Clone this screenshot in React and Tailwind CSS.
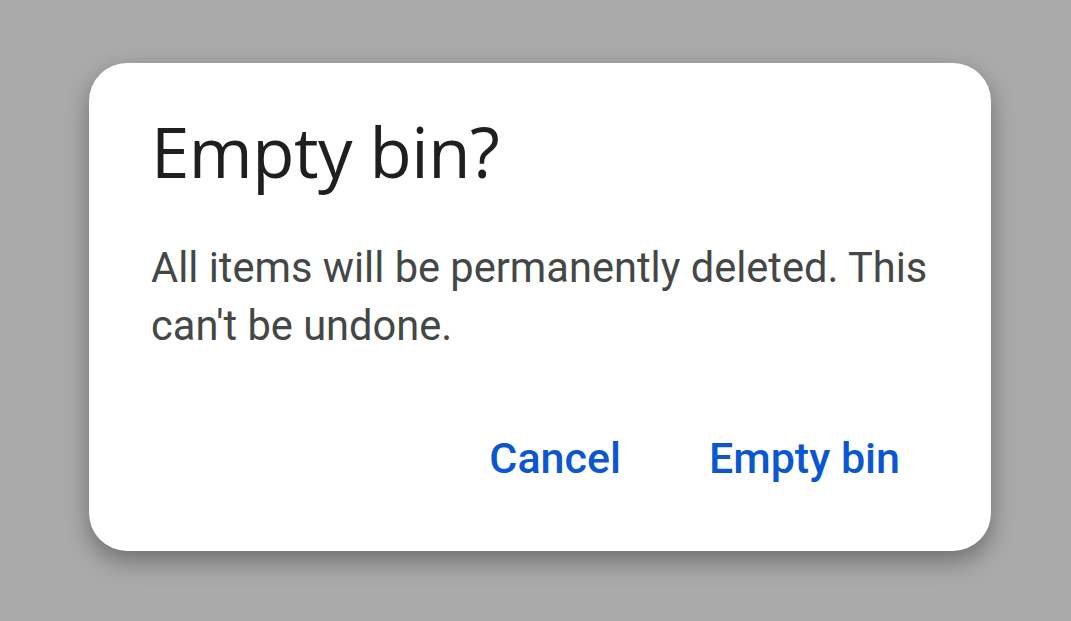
export default function App() {
  return (
    <div className="w-[1071px] h-[621px] bg-[#aaaaaa] pt-[63px] pl-[89px] overflow-hidden">
      <div className="w-[902px] h-[488px] bg-white rounded-[38px] shadow-[0_10px_24px_rgba(0,0,0,0.35)] flex flex-col pl-[62px] pr-[40px]">
        <h1 className="mt-[48px] text-[69px] leading-[80px] text-[#1f1f1f] font-['Open_Sans',sans-serif] tracking-[-0.5px]">
          Empty bin?
        </h1>
        <p className="mt-[48px] text-[41.6px] leading-[58px] text-[#444746] font-['Roboto',sans-serif]">
          All items will be permanently deleted. This can't be undone.
        </p>
        <div className="mt-auto mb-[69px] mr-[51px] flex justify-end gap-[88px] text-[43px] leading-[48px] font-medium text-[#0b57d0] font-['Roboto',sans-serif]">
          <span>Cancel</span>
          <span>Empty bin</span>
        </div>
      </div>
    </div>
  );
}
